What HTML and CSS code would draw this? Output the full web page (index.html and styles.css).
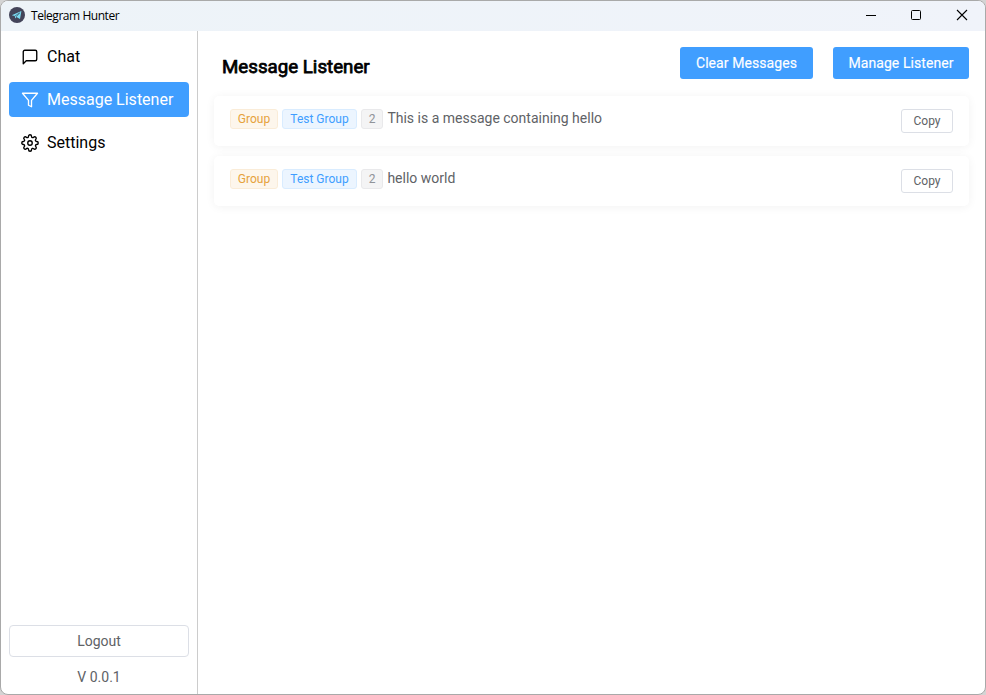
FILE: index.html
```html
<!DOCTYPE html>
<html lang="en">
<head>
<meta charset="utf-8">
<title>Telegram Hunter</title>
<link rel="stylesheet" href="styles.css">
</head>
<body>
<div class="window">
  <header class="titlebar">
    <svg class="logo" width="16" height="16" viewBox="0 0 16 16"><circle cx="8" cy="8" r="8" fill="#434459"/><path d="M2.8 8.3 12.4 4 11 12 7.4 9.9 6.1 11.5 5.8 9.1Z" fill="#7cdcf2"/><path d="M5.8 9.1 10.8 5.8 7.2 9.8" fill="none" stroke="#43657b" stroke-width=".8"/></svg>
    <span class="app-name">Telegram Hunter</span>
    <div class="controls">
      <svg width="46" height="30" viewBox="0 0 46 30"><path d="M18 14.5h10" stroke="#000"/></svg>
      <svg width="46" height="30" viewBox="0 0 46 30"><rect x="17.5" y="9.5" width="9" height="9" rx="1" fill="none" stroke="#000"/></svg>
      <svg width="46" height="30" viewBox="0 0 46 30"><path d="M17 9l10 10M27 9 17 19" stroke="#000" stroke-width="1.1"/></svg>
    </div>
  </header>
  <div class="body">
    <aside class="sidebar">
      <nav class="nav">
        <a class="item"><svg class="icon" viewBox="0 0 24 24"><path d="M21 15a2 2 0 0 1-2 2H7l-4 4V5a2 2 0 0 1 2-2h14a2 2 0 0 1 2 2z"/></svg>Chat</a>
        <a class="item active"><svg class="icon" viewBox="0 0 24 24"><path d="M22 3H2l8 9.46V19l4 2v-8.54z"/></svg>Message Listener</a>
        <a class="item"><svg class="icon" viewBox="0 0 24 24"><circle cx="12" cy="12" r="3"/><path d="M19.4 15a1.65 1.65 0 0 0 .33 1.82l.06.06a2 2 0 1 1-2.83 2.83l-.06-.06a1.65 1.65 0 0 0-2.82 1.17V21a2 2 0 0 1-4 0v-.09a1.65 1.65 0 0 0-2.9-1.26l-.06.06a2 2 0 1 1-2.83-2.83l.06-.06A1.65 1.65 0 0 0 3.09 14H3a2 2 0 0 1 0-4h.09a1.65 1.65 0 0 0 1.26-2.82l-.06-.06a2 2 0 1 1 2.83-2.83l.06.06A1.65 1.65 0 0 0 10 3.09V3a2 2 0 0 1 4 0v.09a1.65 1.65 0 0 0 2.82 1.26l.06-.06a2 2 0 1 1 2.83 2.83l-.06.06A1.65 1.65 0 0 0 20.91 10H21a2 2 0 0 1 0 4h-.09a1.65 1.65 0 0 0-1.51 1z"/></svg>Settings</a>
      </nav>
      <div class="foot">
        <button class="logout">Logout</button>
        <span class="version">V 0.0.1</span>
      </div>
    </aside>
    <main class="main">
      <div class="head">
        <h1>Message Listener</h1>
        <div class="actions">
          <button class="primary clear">Clear Messages</button>
          <button class="primary manage">Manage Listener</button>
        </div>
      </div>
      <div class="cards">
        <article class="card">
          <div class="message"><span class="tag warning">Group</span><span class="tag info">Test Group</span><span class="tag count">2</span><span class="text">This is a message containing hello</span></div>
          <button class="copy">Copy</button>
        </article>
        <article class="card">
          <div class="message"><span class="tag warning">Group</span><span class="tag info">Test Group</span><span class="tag count">2</span><span class="text">hello world</span></div>
          <button class="copy">Copy</button>
        </article>
      </div>
    </main>
  </div>
</div>
</body>
</html>
```
FILE: styles.css
```css
* { box-sizing: border-box; }
html { height: 100%; background: #d4d4d4; }
body { margin: 0; height: 100%; font-family: Roboto, sans-serif; color: #000; }
button { font-family: inherit; margin: 0; padding: 0; border-radius: 3px; }
.window { height: 695px; width: 986px; border: 1px solid #a9a9a9; border-radius: 8px; background: #fff; overflow: hidden; display: flex; flex-direction: column; }
.titlebar { height: 30px; flex: none; display: flex; align-items: center; padding-left: 8px; background: linear-gradient(90deg, #edf3f8, #f0f3fa); }
.logo { margin-top: -2px; }
.app-name { margin: -1px 0 0 6px; font: 12px "Open Sans", sans-serif; letter-spacing: -.45px; white-space: nowrap; }
.controls { margin: 0 -1px 0 auto; display: flex; }
.body { flex: 1; display: flex; min-height: 0; }
.sidebar { width: 197px; flex: none; border-right: 1px solid #ccc; padding: 8px 8px 7px; display: flex; flex-direction: column; justify-content: space-between; }
.nav { display: flex; flex-direction: column; gap: 8px; }
.item { height: 35px; padding-left: 12px; display: flex; align-items: center; gap: 8px; border-radius: 4px; font-size: 16px; white-space: nowrap; }
.active { background: #409eff; color: #fff; }
.icon { width: 18px; height: 18px; fill: none; stroke: currentColor; stroke-width: 1.8; stroke-linecap: round; stroke-linejoin: round; }
.foot { display: flex; flex-direction: column; align-items: center; color: #606266; font-size: 14px; }
.logout { width: 180px; height: 32px; border: 1px solid #dcdfe6; border-radius: 4px; background: #fff; color: #606266; font-size: 14px; }
.version { height: 20px; line-height: 20px; margin-top: 10px; }
.main { flex: 1; padding: 16px 16px 0; }
.head { height: 32px; display: flex; align-items: center; justify-content: space-between; }
h1 { margin: 7px 0 0 8px; font-size: 18.72px; font-weight: 400; -webkit-text-stroke: .75px #000; line-height: 24px; white-space: nowrap; }
.actions { display: flex; gap: 20px; }
.primary { height: 32px; border: 0; background: #409eff; color: #fff; font-size: 14px; font-weight: 400; letter-spacing: .08px; -webkit-text-stroke: .15px #fff; }
.clear { width: 133px; }
.manage { width: 136px; }
.cards { display: flex; flex-direction: column; gap: 10px; margin-top: 17px; }
.card { height: 50px; padding: 13px 16px; display: flex; justify-content: space-between; align-items: flex-start; background: #fff; border-radius: 5px; box-shadow: 0 1px 10px rgba(0, 0, 0, .055); }
.message { display: flex; gap: 4px; height: 20px; }
.tag { height: 20px; border: 1px solid; border-radius: 3px; font-size: 12px; line-height: 18px; text-align: center; white-space: nowrap; }
.warning { width: 48px; color: #e6a23c; background: #fdf6ec; border-color: #faecd8; }
.info { width: 75px; color: #409eff; background: #ecf5ff; border-color: #d9ecff; }
.count { width: 22px; color: #909399; background: #f4f4f5; border-color: #e9e9eb; }
.text { color: #606266; font-size: 14px; line-height: 18px; white-space: nowrap; margin-left: .4px; }
.copy { width: 52px; height: 24px; border: 1px solid #dcdfe6; background: #fff; color: #606266; font-size: 12px; }
```
